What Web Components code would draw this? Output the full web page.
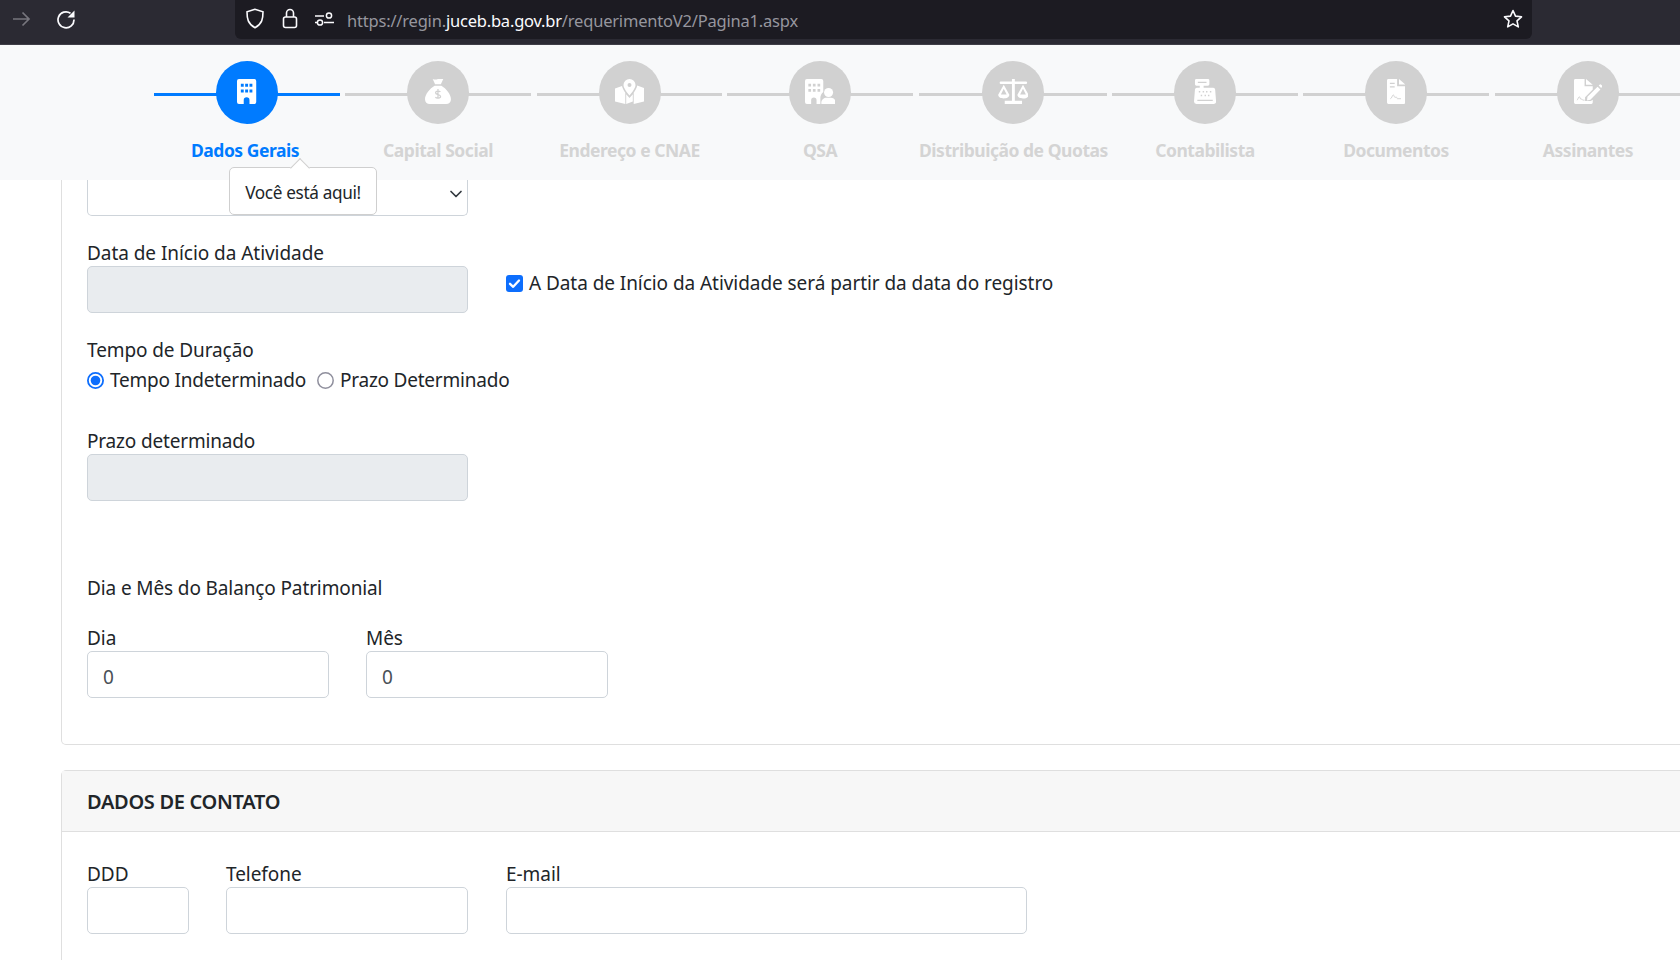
<!DOCTYPE html>
<html lang="pt-BR">
<head>
<meta charset="utf-8">
<title>Requerimento</title>
<style>
  html, body { margin: 0; height: 960px; overflow: hidden; background: #fff; }
  body { font-family: "Noto Sans", "Open Sans", sans-serif; font-size: 19px; color: #212529; }
</style>
</head>
<body>
<browser-bar></browser-bar>

<step-bar>
  <step-item label="Dados Gerais" icon="building" width="186" active></step-item>
  <step-item label="Capital Social" icon="sack" width="186" style="margin-right:1px"></step-item>
  <step-item label="Endereço e CNAE" icon="map" width="185"></step-item>
  <step-item label="QSA" icon="buildinguser" width="186" style="margin-right:1px"></step-item>
  <step-item label="Distribuição de Quotas" icon="scale" width="188"></step-item>
  <step-item label="Contabilista" icon="register" width="186"></step-item>
  <step-item label="Documentos" icon="contract" width="186" style="margin-right:1px"></step-item>
  <step-item label="Assinantes" icon="signature" width="186"></step-item>
</step-bar>

<page-content>
  <form-card class="first">
    <form-field select width="381"></form-field>

    <field-row class="r1">
      <form-field label="Data de Início da Atividade" disabled width="381"></form-field>
      <check-option checked>A Data de Início da Atividade será partir da data do registro</check-option>
    </field-row>

    <radio-group class="r2" label="Tempo de Duração">
      <radio-option checked>Tempo Indeterminado</radio-option>
      <radio-option>Prazo Determinado</radio-option>
    </radio-group>

    <form-field class="r3" label="Prazo determinado" disabled width="381"></form-field>

    <plain-label class="r4">Dia e Mês do Balanço Patrimonial</plain-label>

    <field-row class="r5">
      <form-field label="Dia" value="0" width="242"></form-field>
      <form-field label="Mês" value="0" width="242"></form-field>
    </field-row>
  </form-card>

  <form-card class="second" title="DADOS DE CONTATO">
    <field-row>
      <form-field label="DDD" width="102"></form-field>
      <form-field label="Telefone" width="242"></form-field>
      <form-field label="E-mail" width="521" class="mail"></form-field>
    </field-row>
  </form-card>
</page-content>

<script>
// small helper, every component just sets its own shadow markup
function shadow(el, html) {
  el.attachShadow({ mode: "open" }).innerHTML = html;
}

class BrowserBar extends HTMLElement {
  connectedCallback() {
    shadow(this, `
      <style>
        :host { display: flex; align-items: flex-start; height: 44px; background: #2b2a33; border-bottom: 1px solid #3f3e47; color: #fbfbfe; }
        .nav { display: flex; align-items: center; height: 37px; width: 235px; padding-left: 11px; gap: 25px; box-sizing: border-box; }
        .url { flex: none; width: 1297px; height: 39px; background: #1c1b22; border-radius: 0 0 6px 6px; display: flex; align-items: center; padding-left: 10px; box-sizing: border-box; }
        svg { display: block; flex: none; }
        .icons { display: flex; align-items: center; gap: 17px; margin-bottom: 2px; }
        .text { margin-left: 13px; padding-top: 1px; font: 16.5px "Noto Sans", sans-serif; color: #96969e; white-space: nowrap; letter-spacing: -0.2px; flex: 1; }
        .text b { font-weight: 400; color: #fbfbfe; }
        .star { margin-right: 9px; margin-bottom: 2px; }
      </style>
      <div class="nav">
        <svg width="20" height="20" viewBox="0 0 20 20" fill="none" stroke="#77767e" stroke-width="1.7"><path d="M2 10h16M11.500 3.500 18 10l-6.500 6.500"/></svg>
        <svg width="20" height="20" viewBox="0 0 20 20"><path fill="none" stroke="#fbfbfe" stroke-width="1.700" d="M14.500 4.200A8 8 0 1 0 18 10.500"/><path fill="#fbfbfe" d="M18.500 1.500v7h-7z"/></svg>
      </div>
      <div class="url">
        <div class="icons">
          <svg width="20" height="21" viewBox="0 0 20 21" fill="none" stroke="#fbfbfe" stroke-width="1.6"><path d="M10 1.300 2 3.800c0 7 .8 11.800 8 15.900 7.200-4.100 8-8.900 8-15.900z"/></svg>
          <svg width="16" height="21" viewBox="0 0 16 21" fill="none" stroke="#fbfbfe" stroke-width="1.6"><rect x="1.500" y="9" width="13" height="10.500" rx="2"/><path d="M4.500 9V5a3.500 3.500 0 0 1 7 0v4"/></svg>
          <svg width="19" height="14" viewBox="0 0 19 14" fill="none" stroke="#fbfbfe" stroke-width="1.5"><path d="M0 4h9M0 10.500h2M9 10.500h10"/><circle cx="14" cy="3.500" r="2.600"/><circle cx="5" cy="10.500" r="2.600"/></svg>
        </div>
        <span class="text">https://regin.<b>juceb.ba.gov.br</b>/requerimentoV2/Pagina1.aspx</span>
        <svg class="star" width="20" height="20" viewBox="0 0 20 20" fill="none" stroke="#fbfbfe" stroke-width="1.6" stroke-linejoin="round"><path d="M10 1.500l2.500 5.600 6 .7-4.500 4.100 1.300 6L10 14.900l-5.300 3 1.300-6L1.500 7.800l6-.7z"/></svg>
      </div>
    `);
  }
}

class StepBar extends HTMLElement {
  connectedCallback() {
    shadow(this, `
      <style>
        :host { display: flex; position: relative; z-index: 2; height: 135px; background: #f8f9fa; padding-left: 154px; gap: 5px; box-sizing: border-box; }
      </style>
      <slot></slot>
    `);
  }
}

// icons are all white shapes, cut-outs use --bg so they pick up the circle colour
const STEP_ICONS = {
  building: `<svg viewBox="0 0 20 26"><path fill="#fff" fill-rule="evenodd" d="M2 0h16a2 2 0 0 1 2 2v22a2 2 0 0 1-2 2h-5v-4a3 3 0 0 0-6 0v4H2a2 2 0 0 1-2-2V2a2 2 0 0 1 2-2zM4 5v3h3V5zM8.500 5v3h3V5zM13 5v3h3V5zM4 11v3h3v-3zM8.500 11v3h3v-3zM13 11v3h3v-3z"/></svg>`,
  sack: `<svg viewBox="0 0 27 26"><path fill="#fff" d="M8 0c2 .8 3.500.8 5.500 0S17.500 0 19 0l-2.500 5.500h-6zM10 7h7c5 2.800 10 9 10 14 0 3-2 5-5 5H5c-3 0-5-2-5-5 0-5 5-11.200 10-14z"/><path fill="none" stroke="var(--bg)" stroke-width="1.300" d="M16 13.500c-.8-1-4.800-1.300-5 .8-.2 2.400 5.200 1.400 5.200 3.900 0 2.200-4.400 1.900-5.400.8M13.500 10.500v10"/></svg>`,
  map: `<svg viewBox="0 0 29 25"><path fill="#fff" fill-rule="evenodd" d="M14.500 0a6 6 0 0 1 6 6c0 3-3.500 7.500-6 10.500C12 13.500 8.500 9 8.500 6a6 6 0 0 1 6-6zm0 4a2 2 0 1 0 0 4 2 2 0 0 0 0-4z"/><path fill="#fff" d="M0 9.500 7 7c.5 2.300 2 4.800 3.300 6.800V25L0 22.500zM11.200 15.200l3.300 3.800 3.300-3.800V22.500L11.200 25zM18.700 13.800c1.600-2.200 3-4.700 3.500-7.300L29 9v13.500L18.700 25z"/></svg>`,
  buildinguser: `<svg viewBox="0 0 32 26"><path fill="#fff" fill-rule="evenodd" d="M2 0h15a2 2 0 0 1 2 2v11.500c-2 1.500-3 4-3 6V26h-4v-4a2.800 2.800 0 0 0-5.600 0v4H2a2 2 0 0 1-2-2V2a2 2 0 0 1 2-2zM3.500 5v2.800h2.800V5zM8.200 5v2.800H11V5zM13 5v2.800h2.800V5zM3.500 10.500v2.800h2.800v-2.800zM8.200 10.500v2.800H11v-2.800zM13 10.500v2.800h2.800v-2.800z"/><circle fill="#fff" cx="24.500" cy="14" r="4.700"/><path fill="#fff" d="M17 26v-1.500c0-3 3-5 5-5h5c2.500 0 5 2 5 5V26z"/></svg>`,
  scale: `<svg viewBox="0 0 32 26"><path fill="#fff" d="M14.500 0h3v2.500H29a1.300 1.300 0 0 1 0 2.600H17.500V22.500H25V26H7v-3.500h7.500V5.100H3a1.300 1.300 0 0 1 0-2.600h11.500z"/><path fill="#fff" fill-rule="evenodd" d="M6 6 .2 16.500c0 2.500 2.700 3.800 5.800 3.800s5.800-1.300 5.800-3.800zm0 4.200 3 6H3zM26 6l-5.800 10.500c0 2.500 2.700 3.800 5.800 3.800s5.800-1.300 5.800-3.800zm0 4.200 3 6h-6z"/></svg>`,
  register: `<svg viewBox="0 0 23 26"><path fill="#fff" fill-rule="evenodd" d="M2.500 0h12A1.500 1.500 0 0 1 16 1.500v4A1.500 1.500 0 0 1 14.500 7H10v2h10a2 2 0 0 1 2 1.800L23 23.500a2.500 2.500 0 0 1-2.500 2.500h-18A2.500 2.500 0 0 1 0 23.500L1 10.800A2 2 0 0 1 3 9h3V7H2.500A1.500 1.500 0 0 1 1 5.500v-4A1.500 1.500 0 0 1 2.500 0zM4 2.800v1.400h9V2.800zM5 12.500v1.500h1.500v-1.500zM9 12.500v1.500h1.500v-1.500zM12.500 12.500v1.500H14v-1.500zM16.500 12.500v1.500H18v-1.500zM7 16.500V18h1.500v-1.500zM11 16.500V18h1.500v-1.500zM14.500 16.500V18H16v-1.500zM3.500 21.500V23h16v-1.500z"/></svg>`,
  contract: `<svg viewBox="0 0 19 26"><path fill="#fff" fill-rule="evenodd" d="M1.500 0H10.500V7.500H19V24.500A1.500 1.500 0 0 1 17.500 26H1.500A1.500 1.500 0 0 1 0 24.500V1.500A1.500 1.500 0 0 1 1.500 0zM3 4v1.300h5V4zM3 7.500v1.300h5V7.500z"/><path fill="#fff" d="M12.500 0 19 5.800h-6.500z"/><path fill="none" stroke="var(--bg)" stroke-width="1" d="M3.500 20.500c1.500 0 2-4 3-4s1 3.500 2.500 2.500 1 1.500 2 1.500h3.500"/></svg>`,
  signature: `<svg viewBox="0 0 29.500 26"><path fill="#fff" d="M1.500 0H11V7.500h8.500V11L11.500 19v4h6l2-1.500v3A1.500 1.500 0 0 1 18 26H1.500A1.500 1.500 0 0 1 0 24.500V1.500A1.500 1.500 0 0 1 1.500 0zM12.500 0l7 6h-7z"/><path fill="none" stroke="var(--bg)" stroke-width="1" d="M3 22c1 0 1.500-3.500 2.500-3.500s.8 3 2 2.500 1 1 2 1h1.500"/><path fill="#fff" d="M14 18.500 24.500 8l3 3L17 21.500l-3.500.8zM25.700 6.800l.9-.9a1.200 1.200 0 0 1 1.700 0l.8.8a1.200 1.200 0 0 1 0 1.700l-.9.9z"/></svg>`
};

class StepItem extends HTMLElement {
  connectedCallback() {
    const active = this.hasAttribute("active");
    const color = active ? "#007bff" : "#d1d1d1";
    const text = active ? "#007bff" : "#d4d4d4";
    shadow(this, `
      <style>
        :host { display: block; flex: none; width: ${this.getAttribute("width")}px; --bg: ${color}; }
        .track { display: flex; justify-content: center; margin-top: 16px; background: linear-gradient(${color}, ${color}) 0 32px / 100% 3px no-repeat; }
        .dot { box-sizing: border-box; width: 62px; height: 63px; padding-bottom: 2px; border-radius: 50%; background: ${color}; display: flex; align-items: center; justify-content: center; }
        .dot svg { display: block; height: 25px; width: auto; }
        .name { margin-top: 12px; padding-right: ${active ? 4 : 0}px; text-align: center; font: 700 17.500px/28px "Noto Sans", sans-serif; letter-spacing: -0.47px; color: ${text}; white-space: nowrap; }
      </style>
      <div class="track"><div class="dot">${STEP_ICONS[this.getAttribute("icon")]}</div></div>
      <div class="name">${this.getAttribute("label")}</div>
    `);
  }
}

class PageContent extends HTMLElement {
  connectedCallback() {
    shadow(this, `
      <style>
        :host { display: block; height: 780px; overflow: hidden; padding-left: 61px; position: relative; }
        slot { display: block; margin-right: -30px; }
      </style>
      <slot></slot>
    `);
  }
}

class FormCard extends HTMLElement {
  connectedCallback() {
    const title = this.getAttribute("title");
    this.removeAttribute("title");
    const first = this.classList.contains("first");
    shadow(this, `
      <style>
        :host { display: block; box-sizing: border-box; border: 1px solid #dfdfdf; border-radius: 5px; background: #fff; }
        :host(.first) { border-top: 0; border-radius: 0 0 5px 5px; height: 565px; padding: 0 25px; }
        :host(.second) { margin-top: 25px; height: 300px; }
        .head { height: 61px; padding: 1px 25px 0; box-sizing: border-box; display: flex; align-items: center; background: #f7f7f7; border-bottom: 1px solid #dfdfdf; font-weight: 600; font-size: 20px; letter-spacing: -0.3px; }
        .body { padding: 28px 25px 0; }
      </style>
      ${first ? "<slot></slot>" : `<div class="head">${title}</div><div class="body"><slot></slot></div>`}
    `);
  }
}

class FieldRow extends HTMLElement {
  connectedCallback() {
    shadow(this, `
      <style>
        :host { display: flex; align-items: flex-start; gap: 37px; }
        :host(.r1) { margin-top: 23px; }
        :host(.r5) { margin-top: 22px; }
      </style>
      <slot></slot>
    `);
  }
}

class FormField extends HTMLElement {
  connectedCallback() {
    const label = this.getAttribute("label");
    const value = this.getAttribute("value") || "";
    const isSelect = this.hasAttribute("select");
    const disabled = this.hasAttribute("disabled");
    shadow(this, `
      <style>
        :host { display: block; flex: none; width: ${this.getAttribute("width")}px; }
        :host(.r3) { margin-top: 33px; }
        :host(.r3) label { letter-spacing: -0.17px; }
        :host(.mail) { margin-left: 1px; }
        label { display: block; height: 27px; line-height: 29px; white-space: nowrap; letter-spacing: -0.05px; }
        .box { box-sizing: border-box; height: 47px; border: 1px solid #ced4da; border-radius: 5px; background: ${disabled ? "#e9ecef" : "#fff"}; display: flex; align-items: center; justify-content: space-between; padding: 5px 15px 0; color: #495057; line-height: 1; }
        .box.sel { border-radius: 0 0 5px 5px; border-top: 0; height: 36px; padding: 0 4px 8px 0; }
        svg { display: block; }
      </style>
      ${label ? `<label>${label}</label>` : ""}
      <div class="box ${isSelect ? "sel" : ""}">${value}${isSelect ? `<span></span><svg width="14" height="10" viewBox="0 0 14 10" fill="none" stroke="#343a40" stroke-width="1.700" stroke-linecap="round" stroke-linejoin="round"><path d="M2 2.500l5 5 5-5"/></svg>` : ""}</div>
    `);
  }
}

class CheckOption extends HTMLElement {
  connectedCallback() {
    shadow(this, `
      <style>
        :host { display: flex; align-items: center; gap: 6px; margin: 24px 0 0 1px; height: 40px; line-height: 40px; white-space: nowrap; letter-spacing: -0.06px; }
        svg { display: block; flex: none; }
      </style>
      <svg width="17" height="17" viewBox="0 0 17 17"><rect width="17" height="17" rx="3" fill="#0d6efd"/><path d="M4 8.800l3.200 3L13 5.500" fill="none" stroke="#fff" stroke-width="2.300" stroke-linecap="round" stroke-linejoin="round"/></svg>
      <span><slot></slot></span>
    `);
  }
}

class RadioGroup extends HTMLElement {
  connectedCallback() {
    shadow(this, `
      <style>
        :host { display: block; margin-top: 23px; }
        .lbl { height: 27px; line-height: 29px; letter-spacing: -0.1px; }
        .opts { display: flex; gap: 11px; margin-top: 3px; height: 28px; }
      </style>
      <div class="lbl">${this.getAttribute("label")}</div>
      <div class="opts"><slot></slot></div>
    `);
  }
}

class RadioOption extends HTMLElement {
  connectedCallback() {
    const on = this.hasAttribute("checked");
    shadow(this, `
      <style>
        :host { display: flex; align-items: center; gap: 6px; white-space: nowrap; letter-spacing: -0.22px; line-height: 28px; }
        svg { display: block; flex: none; }
      </style>
      ${on
        ? `<svg width="17" height="17" viewBox="0 0 17 17"><circle cx="8.500" cy="8.500" r="7.600" fill="#fff" stroke="#0d6efd" stroke-width="1.800"/><circle cx="8.500" cy="8.500" r="4.800" fill="#0d6efd"/></svg>`
        : `<svg width="17" height="17" viewBox="0 0 17 17"><circle cx="8.500" cy="8.500" r="7.700" fill="#fff" stroke="#8f8f9d" stroke-width="1.500"/></svg>`}
      <span><slot></slot></span>
    `);
  }
}

class PlainLabel extends HTMLElement {
  connectedCallback() {
    shadow(this, `
      <style>
        :host { display: block; height: 28px; line-height: 28px; margin-top: 73px; letter-spacing: -0.12px; }
      </style>
      <slot></slot>
    `);
  }
}

class TourTip extends HTMLElement {
  connectedCallback() {
    shadow(this, `
      <style>
        :host { position: absolute; left: 229px; top: 167px; z-index: 5; box-sizing: border-box; width: 148px; height: 48px; padding-top: 3px; background: #fff; border: 1px solid #cfcfcf; border-radius: 5px; display: flex; align-items: center; justify-content: center; font-size: 17.200px; letter-spacing: -0.35px; color: #212529; white-space: nowrap; }
        .arrow { position: absolute; left: 63px; top: -7px; width: 13px; height: 13px; background: #fff; border: 1px solid #cfcfcf; border-right: 0; border-bottom: 0; transform: rotate(45deg); }
      </style>
      <span class="arrow"></span>
      <span><slot></slot></span>
    `);
  }
}

customElements.define("browser-bar", BrowserBar);
customElements.define("step-bar", StepBar);
customElements.define("step-item", StepItem);
customElements.define("page-content", PageContent);
customElements.define("form-card", FormCard);
customElements.define("field-row", FieldRow);
customElements.define("form-field", FormField);
customElements.define("check-option", CheckOption);
customElements.define("radio-group", RadioGroup);
customElements.define("radio-option", RadioOption);
customElements.define("plain-label", PlainLabel);
customElements.define("tour-tip", TourTip);

// tooltip hangs over the stepper and the first card
const tip = document.createElement("tour-tip");
tip.textContent = "Você está aqui!";
document.body.appendChild(tip);
</script>
</body>
</html>
